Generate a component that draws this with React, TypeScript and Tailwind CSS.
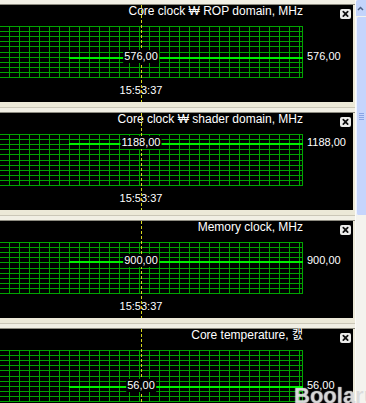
import React from 'react';

type Graph = {
  title: string;
  value: string;
  lineY: number;
};

const graphs: Graph[] = [
  { title: 'Core clock ₩ ROP domain, MHz', value: '576,00', lineY: 32 },
  { title: 'Core clock ₩ shader domain, MHz', value: '1188,00', lineY: 10 },
  { title: 'Memory clock, MHz', value: '900,00', lineY: 20 },
  { title: 'Core temperature, 캜', value: '56,00', lineY: 37 },
];

const font = { fontFamily: '"Liberation Sans", "Noto Sans CJK KR", sans-serif' };

// grid rows / columns of the monitoring graph
const rows = Array.from({ length: 11 }, (_, i) => Math.round(i * 5.1) + 0.5);
const cols = Array.from({ length: 30 }, (_, i) => 9.5 + i * 10);

const Grid: React.FC<{ lineY: number }> = ({ lineY }) => (
  <svg width="303" height="52" shapeRendering="crispEdges" className="block">
    {rows.map((y) => (
      <line key={'h' + y} x1="0" x2="303" y1={y} y2={y} stroke="#00a400" strokeWidth="1" />
    ))}
    {cols.map((x) => (
      <line key={'v' + x} x1={x} x2={x} y1="0.5" y2="51.5" stroke="#00a400" strokeWidth="1" />
    ))}
    <line x1="302.5" x2="302.5" y1="0.5" y2="51.5" stroke="#00a400" strokeWidth="1" />
    <rect x="69" y={lineY - 1} width="234" height="2" fill="#00f000" />
  </svg>
);

const CloseButton: React.FC = () => (
  <div className="mt-[4px] ml-[37px] flex h-[10px] w-[11px] items-center justify-center rounded-[2px] bg-[#ececea]">
    <svg width="11" height="10" viewBox="0 0 11 10">
      <path d="M3.3 2.6 L7.7 7.2 M7.7 2.6 L3.3 7.2" stroke="#111" strokeWidth="1.7" strokeLinecap="round" />
    </svg>
  </div>
);

const Separator: React.FC = () => (
  <div className="w-[355px]">
    <div className="h-[5px] bg-[#ece9d8]" />
    <div className="h-px bg-[#cbc7b8]" />
    <div className="h-[4px] bg-[#f1efe4]" />
    <div className="h-px bg-[#8d8b80]" />
  </div>
);

const GraphPanel: React.FC<{ graph: Graph }> = ({ graph }) => (
  <div className="relative h-[97px] w-[353px] bg-black text-white" style={font}>
    <div className="flex h-[21px] items-start">
      <div className="-mt-px w-[303px] text-right text-[12px] leading-[14px] whitespace-nowrap">{graph.title}</div>
      <CloseButton />
    </div>
    <div className="flex">
      <Grid lineY={graph.lineY} />
      <div className="ml-[4px] text-[11px] leading-[13px]" style={{ marginTop: graph.lineY - 8 }}>
        {graph.value}
      </div>
    </div>
    <div className="mt-[6px] w-[282px] text-center text-[11px] leading-[13px]">15:53:37</div>
    <svg width="1" height="97" className="absolute top-0 left-[141px]" shapeRendering="crispEdges">
      <line x1="0.5" x2="0.5" y1="0" y2="97" stroke="#d4d41c" strokeWidth="1" strokeDasharray="3 2" />
    </svg>
    <div
      className="absolute left-[141px] -translate-x-1/2 bg-black px-px text-[11px] leading-[13px]"
      style={{ top: 21 + graph.lineY - 8 }}
    >
      {graph.value}
    </div>
  </div>
);

const Scrollbar: React.FC = () => (
  <div className="flex h-full w-[11px] shrink-0 flex-col border-l border-[#fbfbf8] bg-[#f4f3ee]">
    <div className="flex h-[16px] items-start rounded-tl-[2px] bg-[#c3d4fb] pt-[6px] pl-[1px]">
      <svg width="7" height="5" viewBox="0 0 7 5">
        <path d="M1 4 L3.5 1.5 L6 4" stroke="#4d6185" strokeWidth="1.5" fill="none" />
      </svg>
    </div>
    <div className="mt-px flex h-[198px] flex-col items-center justify-center rounded-l-[2px] border-l border-[#eef3ff] bg-[#c6d5fc]">
      <div className="flex flex-col gap-px">
        <div className="h-px w-[5px] bg-[#8aa4e4]" />
        <div className="h-px w-[5px] bg-[#8aa4e4]" />
        <div className="h-px w-[5px] bg-[#8aa4e4]" />
        <div className="h-px w-[5px] bg-[#8aa4e4]" />
      </div>
    </div>
  </div>
);

export default function App() {
  return (
    <div className="relative flex h-[403px] w-[366px] overflow-hidden bg-[#ece9d8]">
      <div className="-mt-[6px] w-[355px] shrink-0">
        {graphs.map((g) => (
          <div key={g.title}>
            <Separator />
            <GraphPanel graph={g} />
          </div>
        ))}
      </div>
      <Scrollbar />
      <span
        className="pointer-events-none absolute top-[379px] left-[294px] text-[22px] font-bold whitespace-nowrap text-[#c4c4c4]/60 [text-shadow:0_0_1px_#ffffff]"
        style={{ fontFamily: '"Liberation Sans", sans-serif' }}
      >
        Boolaru
      </span>
    </div>
  );
}
